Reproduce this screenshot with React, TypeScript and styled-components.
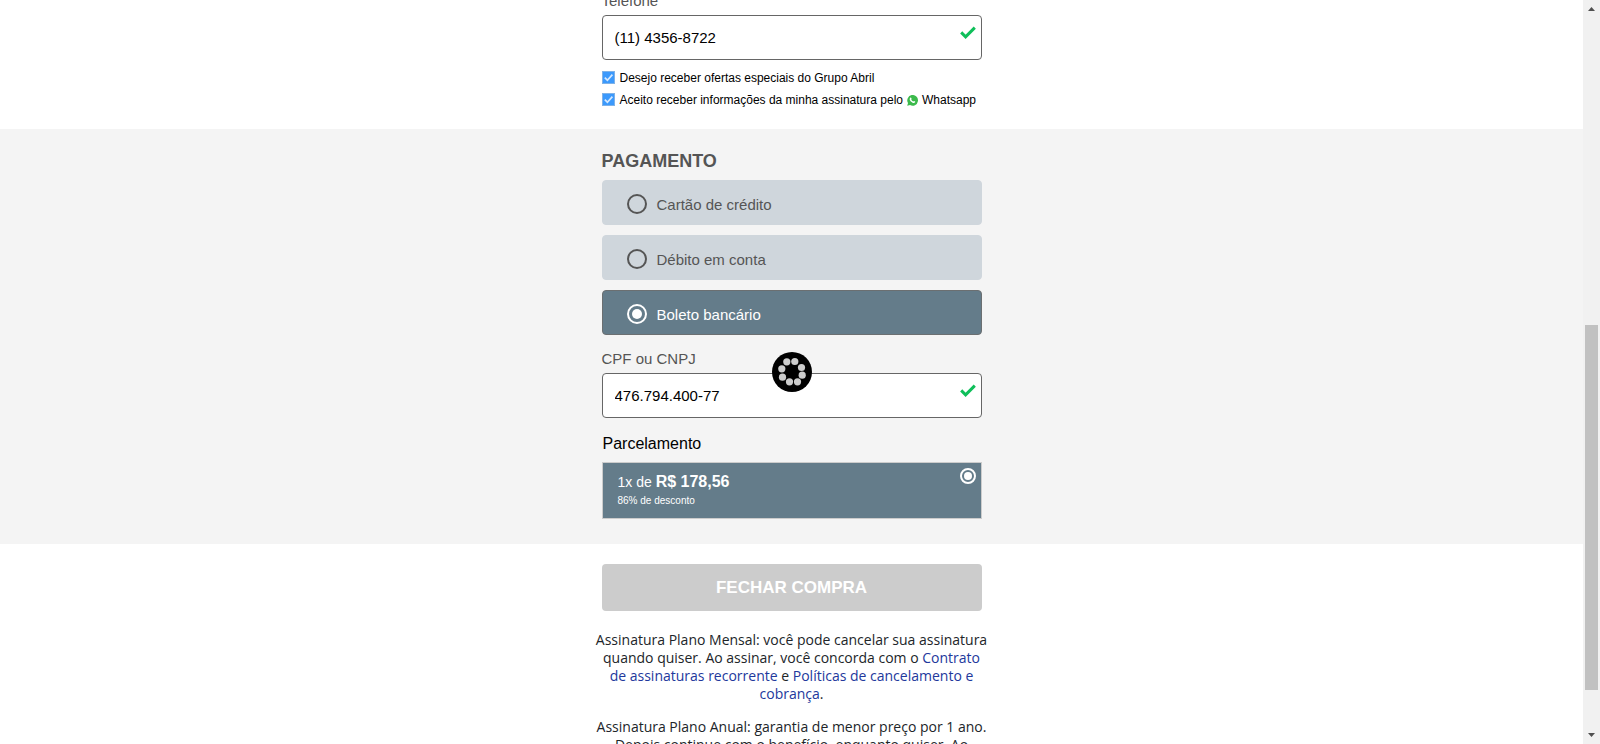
import React, { useState } from "react";
import styled, { createGlobalStyle, css } from "styled-components";

const GlobalStyle = createGlobalStyle`
  *, *::before, *::after { box-sizing: border-box; }
  body {
    margin: 0;
    background: #fff;
    color: #000;
    font-family: "Liberation Sans", Arial, sans-serif;
    font-size: 15px;
  }
`;

const Screen = styled.div`
  display: flex;
  height: 100vh;
  overflow: hidden;
`;

const Page = styled.main`
  position: relative;
  flex: 1;
  min-width: 0;
  overflow: hidden;
`;

const Section = styled.section<{ $shaded?: boolean }>`
  display: flex;
  justify-content: center;
  background: ${(p) => (p.$shaded ? "#f4f4f4" : "#fff")};
`;

const Column = styled.div`
  display: flex;
  flex-direction: column;
  width: 380px;
  max-width: 100%;
`;

const ContactColumn = styled(Column)`
  margin-top: -9px;
  padding-bottom: 20px;
`;

const PaymentColumn = styled(Column)`
  padding: 21px 0 25px;
`;

const FieldLabel = styled.label`
  height: 24px;
  line-height: 19px;
  color: #555;
`;

const Field = styled.div`
  position: relative;
`;

const TextInput = styled.input`
  display: block;
  width: 100%;
  height: 45px;
  padding: 0 40px 0 12px;
  border: 1px solid #666;
  border-radius: 4px;
  background: #fff;
  color: #000;
  font: inherit;
  outline: none;
`;

const ValidMark = styled.svg`
  position: absolute;
  top: 11px;
  right: 6px;
  width: 16px;
  height: 13px;
`;

const Consents = styled.div`
  display: flex;
  flex-direction: column;
  gap: 4px;
  margin-top: 9px;
`;

const Consent = styled.label`
  display: flex;
  align-items: center;
  gap: 4px;
  height: 18px;
  font-size: 12px;
  white-space: nowrap;
`;

const Box = styled.span`
  position: relative;
  display: flex;
  margin: 0 1px 2px 0;

  input {
    appearance: none;
    width: 13px;
    height: 13px;
    margin: 0;
    border: 1px solid #a9b4c0;
    background: #fff;
  }
  input:checked { background: #3b99fc; border-color: #7fb2e8; }
  svg { position: absolute; inset: 0; pointer-events: none; }
  input:not(:checked) + svg { display: none; }
`;

const Title = styled.h2`
  margin: 0 0 8px;
  color: #555;
  font-size: 18px;
  line-height: 22px;
`;

const Methods = styled.div`
  display: flex;
  flex-direction: column;
  gap: 10px;
  margin-bottom: 14px;
`;

const Radio = styled.input<{ $size: number; $dot: number }>`
  appearance: none;
  display: grid;
  place-items: center;
  flex: none;
  width: ${(p) => p.$size}px;
  height: ${(p) => p.$size}px;
  margin: 0;
  border: 2px solid currentColor;
  border-radius: 50%;
  color: inherit;

  &:checked::before {
    content: "";
    width: ${(p) => p.$dot}px;
    height: ${(p) => p.$dot}px;
    border-radius: 50%;
    background: currentColor;
  }
`;

const Method = styled.label<{ $active: boolean }>`
  display: flex;
  align-items: center;
  gap: 10px;
  height: 45px;
  padding: 2px 24px 0;
  border: 1px solid #cfd6dc;
  border-radius: 4px;
  background: #cfd6dc;
  color: #555;
  ${(p) =>
    p.$active &&
    css`
      border-color: #6b6f71;
      background: #647c8a;
      color: #fff;
    `}
`;

const MethodName = styled.span`
  padding-top: 2px;
`;

const InstallmentsTitle = styled.h3`
  margin: 17px 0 9px 1px;
  font-size: 16px;
  font-weight: 400;
  line-height: 18px;
`;

const Installment = styled.label`
  display: flex;
  justify-content: space-between;
  align-items: flex-start;
  height: 57px;
  padding: 5px 5px 0 15px;
  border: 1px solid #ccc;
  background: #647c8a;
  color: #fff;
`;

const Price = styled.span`
  display: block;
  padding-top: 4px;
  font-size: 14px;
  line-height: 19px;

  strong { font-size: 16px; }
  small { display: block; font-size: 10px; line-height: 18px; }
`;

const Checkout = styled.div`
  display: flex;
  flex-direction: column;
  align-items: center;
  padding-top: 20px;
`;

const SubmitButton = styled.button`
  width: 380px;
  max-width: 100%;
  height: 47px;
  margin-bottom: 20px;
  border: 0;
  border-radius: 4px;
  background: #ccc;
  color: #fff;
  font: 700 17px "Liberation Sans", Arial, sans-serif;
`;

const Terms = styled.p`
  width: 400px;
  max-width: 100%;
  margin: 0 0 15px;
  color: #212529;
  font-family: "Segoe UI", "Open Sans", "Noto Sans", sans-serif;
  font-size: 14px;
  line-height: 18px;
  text-align: center;
  white-space: nowrap;

  a { color: #22389c; text-decoration: none; }
`;

const Loader = styled.svg`
  position: absolute;
  top: 50%;
  left: 50%;
  width: 40px;
  height: 40px;
  transform: translate(-50%, -50%);
`;

const ScrollTrack = styled.div`
  display: flex;
  flex-direction: column;
  align-items: center;
  flex: none;
  width: 17px;
  background: #f1f1f1;
`;

const ScrollArrow = styled.svg`
  flex: none;
  width: 17px;
  height: 17px;
  fill: #505050;
`;

const ScrollGap = styled.div<{ $share: number }>`
  flex: ${(p) => p.$share} 0 0;
`;

const ScrollThumb = styled.div`
  flex: 365 0 0;
  width: 13px;
  background: #c1c1c1;
`;

const DOTS = [
  [14.8, 9.8], [22.8, 9.5], [29.5, 15.5], [30.2, 23.2],
  [25.5, 29.8], [17.5, 29.8], [10.5, 25.2], [9.8, 16.8],
];

const METHODS = ["Cartão de crédito", "Débito em conta", "Boleto bancário"];

function CheckField({ id, value }: { id: string; value: string }) {
  return (
    <Field>
      <TextInput id={id} type="text" defaultValue={value} />
      <ValidMark viewBox="0 0 16 13" aria-hidden="true">
        <path d="M1.2 6.4 L5.6 10.8 L14.8 1.6" fill="none" stroke="#0fbf5a" strokeWidth="3" />
      </ValidMark>
    </Field>
  );
}

function CheckBox() {
  return (
    <Box>
      <input type="checkbox" defaultChecked />
      <svg width="13" height="13" viewBox="0 0 13 13" aria-hidden="true">
        <path d="M2.8 6.6 L5.4 9.2 L10.4 3.6" fill="none" stroke="#d4e8ff" strokeWidth="1.7" />
      </svg>
    </Box>
  );
}

function WhatsappIcon() {
  return (
    <svg width="11" height="11" viewBox="0 0 24 24" aria-hidden="true">
      <path d="M0.5 23.5 L2.2 17.6 A11.7 11.7 0 1 1 6.6 21.9 Z" fill="#3cba4c" />
      <path
        d="M7.2 6.2c.7-.7 1.6-.7 2 .1l.9 2.1c.2.6-.8 1.4-.8 1.9.9 1.8 2.4 3.1 4.3 3.9.5.1 1.2-1.3 1.8-1.1l2.2 1.1c.8.5.3 1.7-.4 2.4-1.3 1.1-3.2 1-5.1.1-2.9-1.3-4.8-3.4-5.9-5.7-.6-1.8-.3-3.6 1-4.8Z"
        fill="#fff"
      />
    </svg>
  );
}

export default function App() {
  const [method, setMethod] = useState(METHODS[2]);

  return (
    <Screen>
      <GlobalStyle />
      <Page>
        <Section>
          <ContactColumn>
            <FieldLabel htmlFor="phone">Telefone</FieldLabel>
            <CheckField id="phone" value="(11) 4356-8722" />
            <Consents>
              <Consent>
                <CheckBox />
                Desejo receber ofertas especiais do Grupo Abril
              </Consent>
              <Consent>
                <CheckBox />
                Aceito receber informações da minha assinatura pelo
                <WhatsappIcon />
                Whatsapp
              </Consent>
            </Consents>
          </ContactColumn>
        </Section>

        <Section $shaded>
          <PaymentColumn>
            <Title>PAGAMENTO</Title>
            <Methods>
              {METHODS.map((name) => (
                <Method key={name} $active={name === method}>
                  <Radio
                    type="radio"
                    name="method"
                    $size={20}
                    $dot={10}
                    checked={name === method}
                    onChange={() => setMethod(name)}
                  />
                  <MethodName>{name}</MethodName>
                </Method>
              ))}
            </Methods>
            <FieldLabel htmlFor="document">CPF ou CNPJ</FieldLabel>
            <CheckField id="document" value="476.794.400-77" />
            <InstallmentsTitle>Parcelamento</InstallmentsTitle>
            <Installment>
              <Price>
                1x de <strong>R$ 178,56</strong>
                <small>86% de desconto</small>
              </Price>
              <Radio type="radio" name="installment" $size={16} $dot={8} defaultChecked />
            </Installment>
          </PaymentColumn>
        </Section>

        <Checkout>
          <SubmitButton type="button">FECHAR COMPRA</SubmitButton>
          <Terms>
            Assinatura Plano Mensal: você pode cancelar sua assinatura
            <br />
            quando quiser. Ao assinar, você concorda com o{" "}
            <a href="#contrato">
              Contrato
              <br />
              de assinaturas recorrente
            </a>{" "}
            e{" "}
            <a href="#politicas">
              Políticas de cancelamento e<br />
              cobrança
            </a>
            .
          </Terms>
          <Terms>
            Assinatura Plano Anual: garantia de menor preço por 1 ano.
            <br />
            Depois continue com o benefício, enquanto quiser. Ao
          </Terms>
        </Checkout>

        <Loader viewBox="0 0 40 40" role="img" aria-label="Carregando">
          <circle cx="20" cy="20" r="20" fill="#000" />
          {DOTS.map(([x, y]) => (
            <circle key={`${x}-${y}`} cx={x} cy={y} r="3.6" fill="#ccc" />
          ))}
        </Loader>
      </Page>

      <ScrollTrack aria-hidden="true">
        <ScrollArrow viewBox="0 0 17 17">
          <path d="M5 11 L8.5 7 L12 11 Z" />
        </ScrollArrow>
        <ScrollGap $share={308} />
        <ScrollThumb />
        <ScrollGap $share={37} />
        <ScrollArrow viewBox="0 0 17 17">
          <path d="M5 6 L12 6 L8.5 10 Z" />
        </ScrollArrow>
      </ScrollTrack>
    </Screen>
  );
}
